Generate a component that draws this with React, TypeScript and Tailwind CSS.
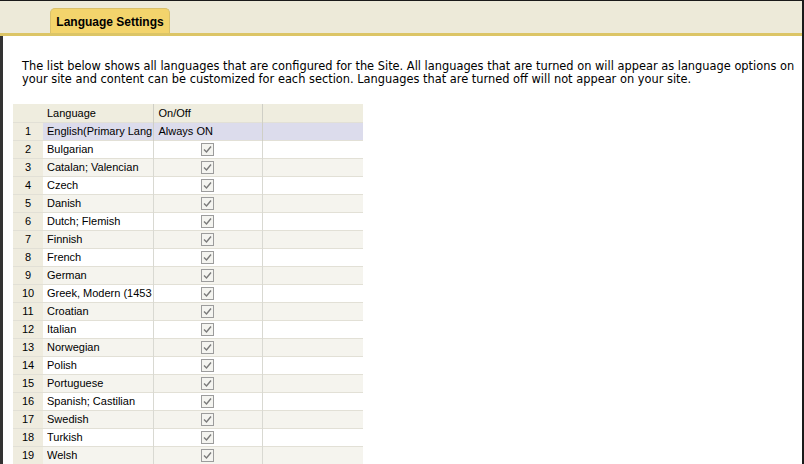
import React from "react";

const languages = [
  "Bulgarian",
  "Catalan; Valencian",
  "Czech",
  "Danish",
  "Dutch; Flemish",
  "Finnish",
  "French",
  "German",
  "Greek, Modern (1453-",
  "Croatian",
  "Italian",
  "Norwegian",
  "Polish",
  "Portuguese",
  "Spanish; Castilian",
  "Swedish",
  "Turkish",
  "Welsh",
];

function Check() {
  return (
    <span className="inline-flex h-[13px] w-[13px] items-center justify-center border border-[#9c9c9c] bg-[#f4f4f0]">
      <svg width="9" height="9" viewBox="0 0 9 9">
        <path d="M1 4.5 L3.5 7 L8 1.5" fill="none" stroke="#7a7a7a" strokeWidth="1.4" />
      </svg>
    </span>
  );
}

export default function App() {
  return (
    <div className="flex h-[464px] w-[804px] flex-col overflow-hidden border-t border-r-2 border-[#1a1a1a] bg-white">
      {/* header band with tab */}
      <div className="flex h-[35px] shrink-0 items-end border-b-[3px] border-[#dcc566] bg-[#edead9] pl-[50px]">
        <div className="flex h-[25px] w-[120px] items-center justify-center whitespace-nowrap rounded-t-[5px] border border-b-0 border-[#d9c06a] bg-[#f3d46c] pt-[2px] font-['Liberation_Sans',sans-serif] text-[12px] font-bold text-black">
          Language Settings
        </div>
      </div>

      <div className="flex-1 border-l-[3px] border-[#333]">
        <p className="pl-[19px] pr-[3px] pt-[24px] font-['DejaVu_Sans',sans-serif] text-[11.4px] leading-[13px] text-black">
          The list below shows all languages that are configured for the Site. All languages that are turned on will appear as language options on your site and content can be customized for each section. Languages that are turned off will not appear on your site.
        </p>

        <table className="mt-[18px] ml-[10px] border-collapse font-['Liberation_Sans',sans-serif] text-[11px] text-black">
          <thead>
            <tr className="h-[18px] bg-[#efeddf]">
              <th className="w-[30px] p-0"></th>
              <th className="w-[110px] border-r border-[#cfcfc6] pl-[4px] text-left font-normal">Language</th>
              <th className="w-[109px] border-r border-[#cfcfc6] pl-[5px] text-left font-normal">On/Off</th>
              <th className="w-[101px] p-0"></th>
            </tr>
          </thead>
          <tbody>
            <tr className="h-[18px] border-t border-[#e2e0d6] bg-[#dcdcec]">
              <td className="bg-[#efecdf] text-center">1</td>
              <td className="border-r border-[#cfcfc6] pl-[4px] whitespace-nowrap">
                <div className="w-[105px] overflow-hidden">English(Primary Langu</div>
              </td>
              <td className="border-r border-[#cfcfc6] pl-[5px]">Always ON</td>
              <td></td>
            </tr>
            {languages.map((name, i) => {
              const n = i + 2;
              return (
                <tr
                  key={name}
                  className={`h-[18px] border-t border-[#e2e0d6] ${n % 2 === 0 ? "bg-white" : "bg-[#f5f4ee]"}`}
                >
                  <td className="bg-[#efecdf] text-center">{n}</td>
                  <td className="border-r border-[#d9d9d2] pl-[4px] whitespace-nowrap">
                    <div className="w-[105px] overflow-hidden">{name}</div>
                  </td>
                  <td className="border-r border-[#d9d9d2] text-center align-middle leading-none">
                    <Check />
                  </td>
                  <td></td>
                </tr>
              );
            })}
          </tbody>
        </table>
      </div>
    </div>
  );
}
